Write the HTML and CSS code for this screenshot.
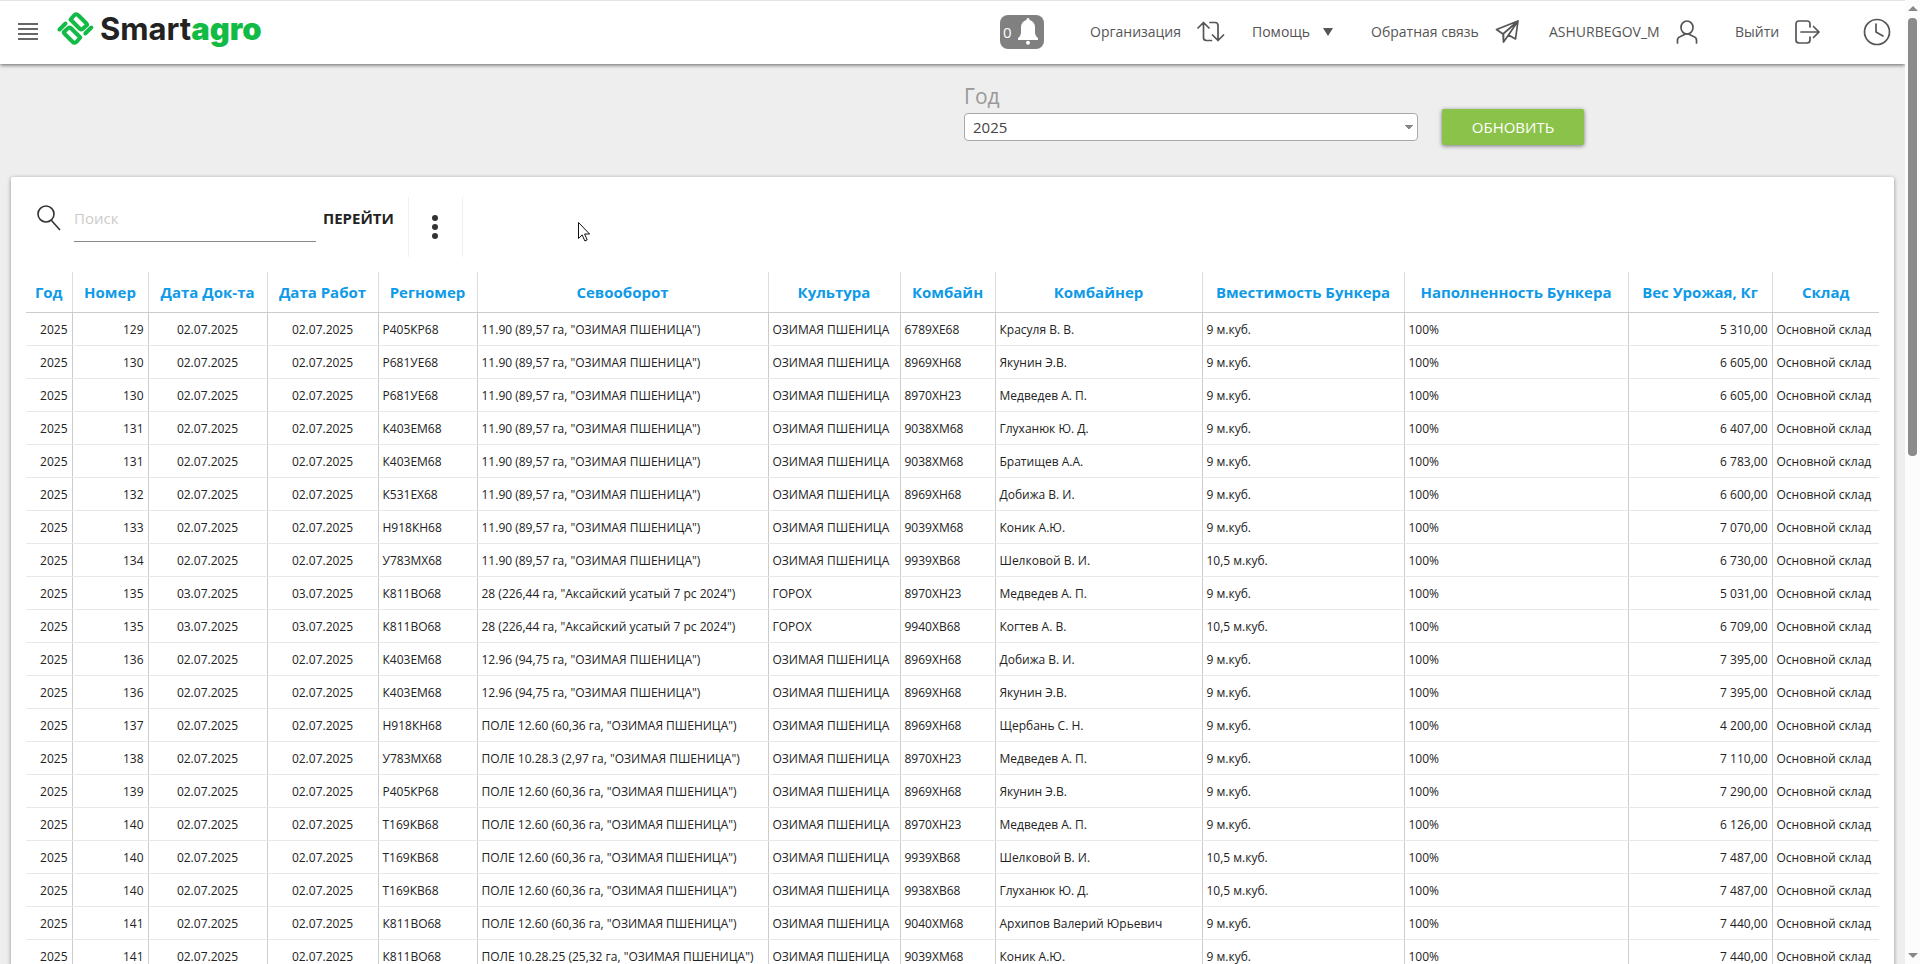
FILE: index.html
```html
<!DOCTYPE html>
<html lang="ru">
<head>
<meta charset="utf-8">
<title>Smartagro</title>
<link rel="stylesheet" href="styles.css">
</head>
<body>
<div class="app">
<div class="page">
<header class="topbar">
  <button class="menu-button" type="button" aria-label="Меню"><span></span><span></span><span></span><span></span></button>
  <a class="logo" href="#">
    <svg width="38" height="36" viewBox="0 0 38 36" fill="none" stroke="#12bb45" stroke-width="4" stroke-linejoin="round" stroke-linecap="round" aria-hidden="true">
      <g id="logo-half"><path d="M13.500 8.500 17 4.500Q19 2 21.500 4.500L29.500 12.500Q30.500 13.600 29.500 14.600L25.500 18Q24.200 19 23 18Z"/><path d="M2.500 18.500 8.500 12.500"/></g>
      <use href="#logo-half" transform="rotate(180 18.400 17.500)"/>
    </svg>
    <span class="logo-text">Smart<b>agro</b></span>
  </a>
  <nav class="nav">
    <button class="bell" type="button" aria-label="Уведомления">0
      <svg width="20" height="27" viewBox="0 0 20 27" aria-hidden="true"><path d="M10 0q1.500 0 1.600 2Q16.500 3.500 17 9v5q0 4 3 6v2H0v-2q3-2 3-6V9Q3.500 3.500 8.400 2 8.500 0 10 0Z"/><circle cx="10" cy="24.800" r="2"/></svg>
    </button>
    <a href="#">Организация
      <svg width="28" height="22" viewBox="0 0 28 22" aria-hidden="true"><path d="M1 7 6.500 1.500 12 7M6.500 1.500v15q0 3 3 3h5M13 1.500h5q3 0 3 3v15M15.500 14 21 19.500l5.500-5.500"/></svg></a>
    <a class="help" href="#">Помощь <svg width="12" height="8" viewBox="0 0 12 8" aria-hidden="true"><path class="solid" d="M1 0h10L6 8Z"/></svg></a>
    <a href="#">Обратная связь
      <svg width="25" height="25" viewBox="0 0 25 25" aria-hidden="true"><path d="M1.500 10.500 23 2l-2.500 18-7-4-5 7-.5-8ZM23 2 8 15M23 2 13.500 16M8.500 23V15"/></svg></a>
    <a href="#">ASHURBEGOV_M
      <svg width="22" height="24" viewBox="0 0 22 24" aria-hidden="true"><ellipse cx="11" cy="7.500" rx="6" ry="6.500"/><path d="M1.500 23v-3q0-2.500 3-3.500l5-2.500h3l5 2.500q3 1 3 3.500v3"/></svg></a>
    <a href="#">Выйти
      <svg width="26" height="24" viewBox="0 0 26 24" aria-hidden="true"><path d="M15 7V4q0-3-3-3H4Q1 1 1 4v16q0 3 3 3h8q3 0 3-3v-3M6 12h18M18.500 6.500 24 12l-5.500 5.500"/></svg></a>
    <button class="clock" type="button" aria-label="История"><svg width="28" height="28" viewBox="0 0 28 28" aria-hidden="true"><circle cx="14" cy="14" r="12.500"/><path d="M13 6v8l7 4"/></svg></button>
  </nav>
</header>
<main class="content">
  <form class="filter">
    <div class="field">
      <label for="year">Год</label>
      <select id="year"><option>2025</option></select>
    </div>
    <button class="refresh" type="button">ОБНОВИТЬ</button>
  </form>
  <section class="card">
    <div class="toolbar">
      <label class="search" for="search">
        <svg width="24" height="28" viewBox="0 0 24 28" role="img" aria-label="Поиск"><circle cx="9" cy="10" r="8"/><path d="M14.500 16.500 23 26"/></svg>
      </label>
      <input id="search" type="text" placeholder="Поиск">
      <button class="go" type="button">ПЕРЕЙТИ</button>
      <button class="more" type="button" aria-label="Действия"><i></i><i></i><i></i></button>
    </div>
    <table class="report">
      <colgroup><col class="c-year"><col class="c-num"><col class="c-doc"><col class="c-work"><col class="c-reg"><col class="c-rot"><col class="c-crop"><col class="c-comb"><col class="c-man"><col class="c-cap"><col class="c-fill"><col class="c-weight"><col class="c-store"></colgroup>
      <thead><tr><th>Год</th><th>Номер</th><th>Дата Док-та</th><th>Дата Работ</th><th>Регномер</th><th>Севооборот</th><th>Культура</th><th>Комбайн</th><th>Комбайнер</th><th>Вместимость Бункера</th><th>Наполненность Бункера</th><th>Вес Урожая, Кг</th><th>Склад</th></tr></thead>
      <tbody id="rows"></tbody>
    </table>
  </section>
</main>
</div>
<div class="scrollbar" aria-hidden="true"><span class="arrow up"></span><span class="thumb"></span><span class="arrow down"></span></div>
<svg class="cursor" width="12" height="20" viewBox="0 0 12 20" aria-hidden="true"><path d="M.5.500v16l3.700-3.600 2.600 6 2.400-1-2.600-5.900h5Z"/></svg>
</div>
<script src="rows.js"></script>
</body>
</html>
```
FILE: styles.css
```css
* { box-sizing: border-box; }
body { margin: 0; background: #eee; color: #222; font: 12px/16px "Open Sans", "Noto Sans", sans-serif; }
button, input, select { font: inherit; color: inherit; }
button { border: 0; background: none; padding: 0; }
a { color: inherit; text-decoration: none; }
svg { display: block; flex: none; }

.app { display: flex; height: 100vh; overflow: hidden; position: relative; }
.page { flex: 1; min-width: 0; overflow: hidden; }

.topbar { display: flex; align-items: center; height: 64px; padding: 0 14px 2px 18px; background: #fff; border-top: 1px solid #e4e4e4; box-shadow: 0 1px 4px rgba(0, 0, 0, .6); position: relative; }
.menu-button { display: flex; flex-direction: column; gap: 3px; width: 20px; }
.menu-button span { height: 2px; background: #666; }
.logo { display: flex; align-items: center; gap: 5px; margin-left: 19px; padding-bottom: 5px; }
.logo-text { font: 700 31px/36px Inter, sans-serif; color: #222; padding-bottom: 1px; }
.logo-text b { color: #12bb45; }
.nav { display: grid; grid-template-columns: 90px 162px 119px 178px 186px 128px 28px; align-items: center; margin-left: auto; color: #555; font-size: 14px; line-height: 24px; }
.nav a { display: flex; align-items: center; gap: 16px; white-space: nowrap; }
.nav .help { gap: 12px; }
.nav svg { fill: none; stroke: #555; stroke-width: 1.7; stroke-linejoin: round; stroke-linecap: round; }
.nav .solid { fill: #555; stroke: none; }
.nav .bell { display: flex; align-items: center; justify-content: space-between; width: 44px; height: 34px; padding: 0 6px 0 3px; border-radius: 8px; background: #808080; color: #fff; font-size: 15px; }
.nav .bell svg { fill: #fff; stroke: none; }

.filter { display: flex; gap: 24px; padding: 20px 16px 0 964px; height: 113px; }
.field { display: flex; flex-direction: column; width: 454px; }
.field label { font-size: 21px; line-height: 24px; color: #999; margin-bottom: 5px; }
.field select { appearance: none; height: 28px; padding: 0 8px; border: 1px solid #aaa; border-radius: 4px; font-size: 15px; line-height: 24px; color: #444; background: linear-gradient(to bottom right, #888 50%, transparent 50%) right 4px center / 4px 5px no-repeat, linear-gradient(to bottom left, #888 50%, transparent 50%) right 8px center / 4px 5px no-repeat, #fff; }
.refresh { width: 142px; height: 36px; margin-top: 25px; border-radius: 2px; background: #8bc34a; color: #fff; font-size: 15px; box-shadow: 0 1px 4px rgba(0, 0, 0, .5); }

.card { margin: 0 11px; padding: 20px 15px 0; min-height: 100vh; background: #fff; border-radius: 2px; box-shadow: 0 1px 4px rgba(0, 0, 0, .4); }
.toolbar { display: flex; height: 60px; margin-bottom: 15px; padding-left: 11px; }
.search { width: 37px; padding-top: 7px; }
.search svg { fill: none; stroke: #333; stroke-width: 1.6; }
.toolbar input { width: 242px; height: 45px; padding: 0 0 2px; border: 0; border-bottom: 1px solid #888; outline: 0; font-size: 15px; }
.toolbar input::placeholder { color: #ccc; opacity: 1; }
.go { height: 45px; padding: 0 14px 3px 7px; font-size: 15px; font-weight: 700; color: #222; }
.more { display: flex; flex-direction: column; align-items: center; justify-content: center; gap: 3px; width: 55px; border: solid #edf1f4; border-width: 0 1px; }
.more i { width: 6px; height: 6px; border-radius: 50%; background: #333; }

.report { width: 100%; table-layout: fixed; border-collapse: collapse; }
.report th { height: 40px; padding: 0; border-right: 1px solid #ddd; border-bottom: 1px solid #ccc; color: #0f9ae8; font-size: 15px; font-weight: 700; white-space: nowrap; }
.report td { height: 33px; padding: 2px 4px 0; border-right: 1px solid #ccc; border-bottom: 1px solid #e8e8e8; white-space: nowrap; overflow: hidden; }
.report th:last-child, .report td:last-child { border-right: 0; }
.report td:nth-child(1), .report td:nth-child(2), .report td:nth-child(12) { text-align: right; }
.report td:nth-child(3), .report td:nth-child(4) { text-align: center; }
.c-year { width: 46px; } .c-num { width: 76px; } .c-doc { width: 119px; } .c-work { width: 111px; }
.c-reg { width: 99px; } .c-rot { width: 291px; } .c-crop { width: 132px; } .c-comb { width: 95px; }
.c-man { width: 207px; } .c-cap { width: 202px; } .c-fill { width: 224px; } .c-weight { width: 144px; }

.scrollbar { display: flex; flex-direction: column; align-items: center; width: 15px; padding: 6px 0; background: #fcfcfc; }
.arrow { border: solid transparent; border-width: 0 5px; }
.up { border-bottom: 5px solid #888; }
.down { border-top: 5px solid #888; margin-top: auto; }
.thumb { width: 9px; height: 46%; margin-top: 7px; border-radius: 4px; background: #8b8b8b; }
.cursor { position: absolute; left: 578px; top: 222px; fill: #fff; stroke: #111; }
```
FILE: rows.js
```js
const OZ = "ОЗИМАЯ ПШЕНИЦА";
const field = (name, area, crop) => `${name} (${area} га, "${crop || OZ}")`;
const F90 = field("11.90", "89,57"), F28 = field("28", "226,44", "Аксайский усатый 7 рс 2024");
const F96 = field("12.96", "94,75"), F60 = field("ПОЛЕ 12.60", "60,36");
const records = [
  [129, "Р405КР68", F90, "6789ХЕ68", "Красуля В. В.", 9, "5 310,00"],
  [130, "Р681УЕ68", F90, "8969ХН68", "Якунин Э.В.", 9, "6 605,00"],
  [130, "Р681УЕ68", F90, "8970ХН23", "Медведев А. П.", 9, "6 605,00"],
  [131, "К403ЕМ68", F90, "9038ХМ68", "Глуханюк Ю. Д.", 9, "6 407,00"],
  [131, "К403ЕМ68", F90, "9038ХМ68", "Братищев А.А.", 9, "6 783,00"],
  [132, "К531ЕХ68", F90, "8969ХН68", "Добижа В. И.", 9, "6 600,00"],
  [133, "Н918КН68", F90, "9039ХМ68", "Коник А.Ю.", 9, "7 070,00"],
  [134, "У783МХ68", F90, "9939ХВ68", "Шелковой В. И.", "10,5", "6 730,00"],
  [135, "К811ВО68", F28, "8970ХН23", "Медведев А. П.", 9, "5 031,00"],
  [135, "К811ВО68", F28, "9940ХВ68", "Когтев А. В.", "10,5", "6 709,00"],
  [136, "К403ЕМ68", F96, "8969ХН68", "Добижа В. И.", 9, "7 395,00"],
  [136, "К403ЕМ68", F96, "8969ХН68", "Якунин Э.В.", 9, "7 395,00"],
  [137, "Н918КН68", F60, "8969ХН68", "Щербань С. Н.", 9, "4 200,00"],
  [138, "У783МХ68", field("ПОЛЕ 10.28.3", "2,97"), "8970ХН23", "Медведев А. П.", 9, "7 110,00"],
  [139, "Р405КР68", F60, "8969ХН68", "Якунин Э.В.", 9, "7 290,00"],
  [140, "Т169КВ68", F60, "8970ХН23", "Медведев А. П.", 9, "6 126,00"],
  [140, "Т169КВ68", F60, "9939ХВ68", "Шелковой В. И.", "10,5", "7 487,00"],
  [140, "Т169КВ68", F60, "9938ХВ68", "Глуханюк Ю. Д.", "10,5", "7 487,00"],
  [141, "К811ВО68", F60, "9040ХМ68", "Архипов Валерий Юрьевич", 9, "7 440,00"],
  [141, "К811ВО68", field("ПОЛЕ 10.28.25", "25,32"), "9039ХМ68", "Коник А.Ю.", 9, "7 440,00"]
];
const body = document.getElementById("rows");
for (const [num, reg, rotation, combine, driver, volume, weight] of records) {
  const date = num === 135 ? "03.07.2025" : "02.07.2025";
  const crop = num === 135 ? "ГОРОХ" : OZ;
  const row = body.insertRow();
  for (const text of ["2025", num, date, date, reg, rotation, crop, combine, driver, volume + " м.куб.", "100%", weight, "Основной склад"]) {
    row.insertCell().textContent = text;
  }
}
```
